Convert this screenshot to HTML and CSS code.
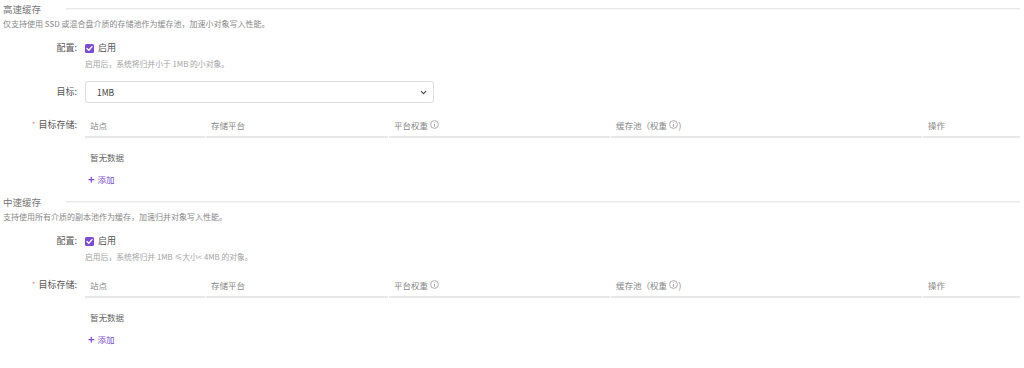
FILE: index.html
```html
<!DOCTYPE html>
<html lang="zh-CN">
<head>
<meta charset="utf-8">
<link rel="stylesheet" href="styles.css">
</head>
<body>
<div class="page">
  <section class="section">
    <div class="sec-title"><span class="sec-name">高速缓存</span><span class="sec-line"></span></div>
    <div class="sec-desc">仅支持使用 SSD 或混合盘介质的存储池作为缓存池，加速小对象写入性能。</div>

    <div class="form-item row-config">
      <div class="label">配置:</div>
      <div class="content">
        <label class="check"><span class="box"><svg width="9" height="9" viewBox="0 0 9 9"><path d="M2 4.6 L3.8 6.3 L7 2.6" fill="none" stroke="#fff" stroke-width="1.4" stroke-linecap="round" stroke-linejoin="round"/></svg></span><span class="check-text">启用</span></label>
      </div>
    </div>
    <div class="hint">启用后，系统将归并小于 1MB 的小对象。</div>

    <div class="form-item row-select">
      <div class="label">目标:</div>
      <div class="content">
        <div class="select"><span>1MB</span><svg class="chev" width="7" height="5" viewBox="0 0 7 5"><path d="M1.2 1.3 L3.5 3.6 L5.8 1.3" fill="none" stroke="#444" stroke-width="1.1" stroke-linecap="round" stroke-linejoin="round"/></svg></div>
      </div>
    </div>

    <div class="form-item row-table">
      <div class="label"><span class="req">*</span>目标存储:</div>
      <div class="content">
        <div class="table-head">
          <div class="th">站点</div>
          <div class="th">存储平台</div>
          <div class="th">平台权重<svg class="info" width="9" height="9" viewBox="0 0 9 9"><circle cx="4.5" cy="4.5" r="3.9" fill="none" stroke="#999" stroke-width="0.8"/><path d="M4.5 4 V6.6" stroke="#999" stroke-width="0.9"/><circle cx="4.5" cy="2.7" r="0.5" fill="#999"/></svg></div>
          <div class="th">缓存池（权重<svg class="info" width="9" height="9" viewBox="0 0 9 9"><circle cx="4.5" cy="4.5" r="3.9" fill="none" stroke="#999" stroke-width="0.8"/><path d="M4.5 4 V6.6" stroke="#999" stroke-width="0.9"/><circle cx="4.5" cy="2.7" r="0.5" fill="#999"/></svg><span class="paren">)</span></div>
          <div class="th">操作</div>
        </div>
        <div class="empty">暂无数据</div>
        <div class="add"><span class="plus">+</span>添加</div>
      </div>
    </div>
  </section>

  <section class="section second">
    <div class="sec-title"><span class="sec-name">中速缓存</span><span class="sec-line"></span></div>
    <div class="sec-desc">支持使用所有介质的副本池作为缓存，加速归并对象写入性能。</div>

    <div class="form-item row-config">
      <div class="label">配置:</div>
      <div class="content">
        <label class="check"><span class="box"><svg width="9" height="9" viewBox="0 0 9 9"><path d="M2 4.6 L3.8 6.3 L7 2.6" fill="none" stroke="#fff" stroke-width="1.4" stroke-linecap="round" stroke-linejoin="round"/></svg></span><span class="check-text">启用</span></label>
      </div>
    </div>
    <div class="hint">启用后，系统将归并 1MB ≤大小&lt; 4MB 的对象。</div>

    <div class="form-item row-table">
      <div class="label"><span class="req">*</span>目标存储:</div>
      <div class="content">
        <div class="table-head">
          <div class="th">站点</div>
          <div class="th">存储平台</div>
          <div class="th">平台权重<svg class="info" width="9" height="9" viewBox="0 0 9 9"><circle cx="4.5" cy="4.5" r="3.9" fill="none" stroke="#999" stroke-width="0.8"/><path d="M4.5 4 V6.6" stroke="#999" stroke-width="0.9"/><circle cx="4.5" cy="2.7" r="0.5" fill="#999"/></svg></div>
          <div class="th">缓存池（权重<svg class="info" width="9" height="9" viewBox="0 0 9 9"><circle cx="4.5" cy="4.5" r="3.9" fill="none" stroke="#999" stroke-width="0.8"/><path d="M4.5 4 V6.6" stroke="#999" stroke-width="0.9"/><circle cx="4.5" cy="2.7" r="0.5" fill="#999"/></svg><span class="paren">)</span></div>
          <div class="th">操作</div>
        </div>
        <div class="empty">暂无数据</div>
        <div class="add"><span class="plus">+</span>添加</div>
      </div>
    </div>
  </section>
</div>
</body>
</html>
```

FILE: styles.css
```css
* { box-sizing: border-box; }
html, body { margin: 0; padding: 0; background: #fff; }
body {
  font-family: "Noto Sans CJK SC", "Noto Sans", sans-serif;
  color: #333;
  width: 1024px;
  height: 368px;
  overflow: hidden;
}
.page { padding: 0 4px 0 3px; }

.second { margin-top: 7px; }

.sec-title {
  display: flex;
  align-items: center;
  height: 18px;
}
.sec-name {
  font-size: 9.5px;
  color: #777;
  line-height: 18px;
  width: 63px;
}
.sec-line {
  flex: 1;
  height: 2px;
  border-top: 1px solid #e9e9e9;
  background: #f6f6f6;
  margin-top: -1px;
}
.sec-desc {
  font-size: 8px;
  line-height: 12px;
  height: 12px;
  color: #888;
}

.form-item { display: flex; }
.label {
  width: 74px;
  text-align: right;
  font-size: 9px;
  color: #555;
  flex: none;
}
.content { margin-left: 8px; flex: 1; }

.row-config { margin-top: 10px; height: 16px; align-items: center; }
.row-config .label { line-height: 16px; }
.check { display: flex; align-items: center; }
.box {
  width: 9px; height: 9px;
  border-radius: 1.5px;
  background: #7b4bd8;
  display: flex; align-items: center; justify-content: center;
}
.box svg { display: block; }
.check-text { font-size: 9px; color: #555; margin-left: 4px; line-height: 16px; }

.hint {
  margin-top: 2px;
  margin-left: 82px;
  font-size: 7.8px;
  line-height: 12px;
  height: 12px;
  color: #a3a3a3;
}

.row-select { margin-top: 11px; height: 22px; align-items: center; }
.row-select .label { line-height: 22px; }
.select {
  width: 349px;
  height: 22px;
  border: 1px solid #dcdcdc;
  border-radius: 3px;
  display: flex;
  align-items: center;
  justify-content: space-between;
  padding: 0 6px 0 11px;
  font-size: 8.5px;
  color: #444;
}
.chev { display: block; }

.row-table { margin-top: 11px; }
.row-table .label { line-height: 22px; }
.req { color: #f08a8a; font-size: 8px; margin-right: 3px; }

.table-head {
  display: grid;
  grid-template-columns: 120px 182px 221px 311px 1fr;
  column-gap: 1px;
}
.th {
  height: 24px;
  line-height: 22px;
  border-bottom: 2px solid #e8e8e8;
  font-size: 8.5px;
  color: #888;
  padding-left: 5px;
  display: flex;
  align-items: center;
  padding-bottom: 1px;
}
.info { display: block; margin-left: 1.5px; }
.paren { margin-left: 1px; }

.empty {
  padding-top: 12px;
  padding-left: 5px;
  font-size: 8.5px;
  line-height: 14px;
  color: #666;
}
.add {
  margin-top: 8px;
  padding-left: 3px;
  font-size: 8.5px;
  line-height: 14px;
  color: #7b4bd8;
  display: flex;
  align-items: center;
}
.plus { font-size: 11px; font-weight: bold; margin-right: 3px; line-height: 14px; }
```
